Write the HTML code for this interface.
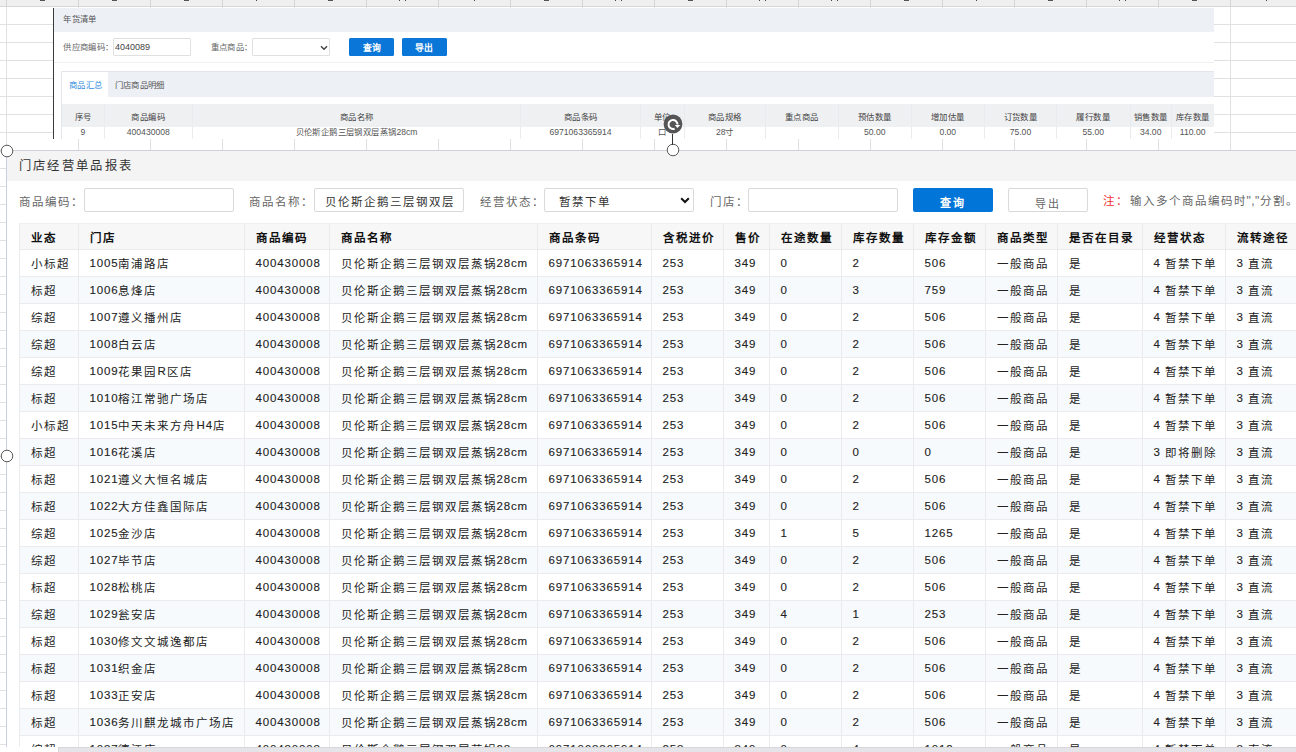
<!DOCTYPE html>
<html lang="zh-CN"><head><meta charset="utf-8"><title>sheet</title>
<style>
html,body{margin:0;padding:0;width:1296px;height:752px;overflow:hidden;background:#fff;position:relative}
body{font-family:"Liberation Sans",sans-serif}
.t{position:absolute;white-space:nowrap}
</style></head><body>
<div style="position:absolute;left:0px;top:0px;width:1296px;height:6px;background:#efefef"></div>
<div style="position:absolute;left:0px;top:6px;width:1296px;height:1px;background:#d6d6d6"></div>
<div style="position:absolute;left:6px;top:0px;width:1px;height:6px;background:#d6d6d6"></div>
<div style="position:absolute;left:6px;top:7px;width:1px;height:745px;background:#e1e1e1"></div>
<div style="position:absolute;left:40px;top:0px;width:5px;height:1px;background:#555"></div>
<div style="position:absolute;left:78px;top:0px;width:1px;height:6px;background:#d6d6d6"></div>
<div style="position:absolute;left:78px;top:7px;width:1px;height:745px;background:#e1e1e1"></div>
<div style="position:absolute;left:112px;top:0px;width:5px;height:1px;background:#555"></div>
<div style="position:absolute;left:150px;top:0px;width:1px;height:6px;background:#d6d6d6"></div>
<div style="position:absolute;left:150px;top:7px;width:1px;height:745px;background:#e1e1e1"></div>
<div style="position:absolute;left:184px;top:0px;width:5px;height:1px;background:#555"></div>
<div style="position:absolute;left:222px;top:0px;width:1px;height:6px;background:#d6d6d6"></div>
<div style="position:absolute;left:222px;top:7px;width:1px;height:745px;background:#e1e1e1"></div>
<div style="position:absolute;left:256px;top:0px;width:1px;height:1px;background:#444"></div>
<div style="position:absolute;left:294px;top:0px;width:1px;height:6px;background:#d6d6d6"></div>
<div style="position:absolute;left:294px;top:7px;width:1px;height:745px;background:#e1e1e1"></div>
<div style="position:absolute;left:328px;top:0px;width:5px;height:1px;background:#555"></div>
<div style="position:absolute;left:366px;top:0px;width:1px;height:6px;background:#d6d6d6"></div>
<div style="position:absolute;left:366px;top:7px;width:1px;height:745px;background:#e1e1e1"></div>
<div style="position:absolute;left:399px;top:0px;width:1px;height:1px;background:#444"></div>
<div style="position:absolute;left:405px;top:0px;width:1px;height:1px;background:#444"></div>
<div style="position:absolute;left:438px;top:0px;width:1px;height:6px;background:#d6d6d6"></div>
<div style="position:absolute;left:438px;top:7px;width:1px;height:745px;background:#e1e1e1"></div>
<div style="position:absolute;left:474px;top:0px;width:1px;height:1px;background:#444"></div>
<div style="position:absolute;left:510px;top:0px;width:1px;height:6px;background:#d6d6d6"></div>
<div style="position:absolute;left:510px;top:7px;width:1px;height:745px;background:#e1e1e1"></div>
<div style="position:absolute;left:544px;top:0px;width:5px;height:1px;background:#555"></div>
<div style="position:absolute;left:582px;top:0px;width:1px;height:6px;background:#d6d6d6"></div>
<div style="position:absolute;left:582px;top:7px;width:1px;height:745px;background:#e1e1e1"></div>
<div style="position:absolute;left:615px;top:0px;width:1px;height:1px;background:#444"></div>
<div style="position:absolute;left:621px;top:0px;width:1px;height:1px;background:#444"></div>
<div style="position:absolute;left:654px;top:0px;width:1px;height:6px;background:#d6d6d6"></div>
<div style="position:absolute;left:654px;top:7px;width:1px;height:745px;background:#e1e1e1"></div>
<div style="position:absolute;left:688px;top:0px;width:5px;height:1px;background:#555"></div>
<div style="position:absolute;left:726px;top:0px;width:1px;height:6px;background:#d6d6d6"></div>
<div style="position:absolute;left:726px;top:7px;width:1px;height:745px;background:#e1e1e1"></div>
<div style="position:absolute;left:759px;top:0px;width:1px;height:1px;background:#444"></div>
<div style="position:absolute;left:765px;top:0px;width:1px;height:1px;background:#444"></div>
<div style="position:absolute;left:798px;top:0px;width:1px;height:6px;background:#d6d6d6"></div>
<div style="position:absolute;left:798px;top:7px;width:1px;height:745px;background:#e1e1e1"></div>
<div style="position:absolute;left:831px;top:0px;width:1px;height:1px;background:#444"></div>
<div style="position:absolute;left:837px;top:0px;width:1px;height:1px;background:#444"></div>
<div style="position:absolute;left:870px;top:0px;width:1px;height:6px;background:#d6d6d6"></div>
<div style="position:absolute;left:870px;top:7px;width:1px;height:745px;background:#e1e1e1"></div>
<div style="position:absolute;left:904px;top:0px;width:5px;height:1px;background:#555"></div>
<div style="position:absolute;left:942px;top:0px;width:1px;height:6px;background:#d6d6d6"></div>
<div style="position:absolute;left:942px;top:7px;width:1px;height:745px;background:#e1e1e1"></div>
<div style="position:absolute;left:976px;top:0px;width:1px;height:1px;background:#444"></div>
<div style="position:absolute;left:1014px;top:0px;width:1px;height:6px;background:#d6d6d6"></div>
<div style="position:absolute;left:1014px;top:7px;width:1px;height:745px;background:#e1e1e1"></div>
<div style="position:absolute;left:1048px;top:0px;width:5px;height:1px;background:#555"></div>
<div style="position:absolute;left:1086px;top:0px;width:1px;height:6px;background:#d6d6d6"></div>
<div style="position:absolute;left:1086px;top:7px;width:1px;height:745px;background:#e1e1e1"></div>
<div style="position:absolute;left:1119px;top:0px;width:1px;height:1px;background:#444"></div>
<div style="position:absolute;left:1125px;top:0px;width:1px;height:1px;background:#444"></div>
<div style="position:absolute;left:1158px;top:0px;width:1px;height:6px;background:#d6d6d6"></div>
<div style="position:absolute;left:1158px;top:7px;width:1px;height:745px;background:#e1e1e1"></div>
<div style="position:absolute;left:1192px;top:0px;width:5px;height:1px;background:#555"></div>
<div style="position:absolute;left:1230px;top:0px;width:1px;height:6px;background:#d6d6d6"></div>
<div style="position:absolute;left:1230px;top:7px;width:1px;height:745px;background:#e1e1e1"></div>
<div style="position:absolute;left:1266px;top:0px;width:1px;height:1px;background:#444"></div>
<div style="position:absolute;left:1302px;top:0px;width:1px;height:6px;background:#d6d6d6"></div>
<div style="position:absolute;left:1302px;top:7px;width:1px;height:745px;background:#e1e1e1"></div>
<div style="position:absolute;left:1335px;top:0px;width:1px;height:1px;background:#444"></div>
<div style="position:absolute;left:1341px;top:0px;width:1px;height:1px;background:#444"></div>
<div style="position:absolute;left:0px;top:24px;width:1296px;height:1px;background:#e1e1e1"></div>
<div style="position:absolute;left:0px;top:42px;width:1296px;height:1px;background:#e1e1e1"></div>
<div style="position:absolute;left:0px;top:60px;width:1296px;height:1px;background:#e1e1e1"></div>
<div style="position:absolute;left:0px;top:78px;width:1296px;height:1px;background:#e1e1e1"></div>
<div style="position:absolute;left:0px;top:96px;width:1296px;height:1px;background:#e1e1e1"></div>
<div style="position:absolute;left:0px;top:114px;width:1296px;height:1px;background:#e1e1e1"></div>
<div style="position:absolute;left:0px;top:132px;width:1296px;height:1px;background:#e1e1e1"></div>
<div style="position:absolute;left:0px;top:150px;width:1296px;height:1px;background:#e1e1e1"></div>
<div style="position:absolute;left:0px;top:168px;width:1296px;height:1px;background:#e1e1e1"></div>
<div style="position:absolute;left:0px;top:186px;width:1296px;height:1px;background:#e1e1e1"></div>
<div style="position:absolute;left:0px;top:204px;width:1296px;height:1px;background:#e1e1e1"></div>
<div style="position:absolute;left:0px;top:222px;width:1296px;height:1px;background:#e1e1e1"></div>
<div style="position:absolute;left:0px;top:240px;width:1296px;height:1px;background:#e1e1e1"></div>
<div style="position:absolute;left:0px;top:258px;width:1296px;height:1px;background:#e1e1e1"></div>
<div style="position:absolute;left:0px;top:276px;width:1296px;height:1px;background:#e1e1e1"></div>
<div style="position:absolute;left:0px;top:294px;width:1296px;height:1px;background:#e1e1e1"></div>
<div style="position:absolute;left:0px;top:312px;width:1296px;height:1px;background:#e1e1e1"></div>
<div style="position:absolute;left:0px;top:330px;width:1296px;height:1px;background:#e1e1e1"></div>
<div style="position:absolute;left:0px;top:348px;width:1296px;height:1px;background:#e1e1e1"></div>
<div style="position:absolute;left:0px;top:366px;width:1296px;height:1px;background:#e1e1e1"></div>
<div style="position:absolute;left:0px;top:384px;width:1296px;height:1px;background:#e1e1e1"></div>
<div style="position:absolute;left:0px;top:402px;width:1296px;height:1px;background:#e1e1e1"></div>
<div style="position:absolute;left:0px;top:420px;width:1296px;height:1px;background:#e1e1e1"></div>
<div style="position:absolute;left:0px;top:438px;width:1296px;height:1px;background:#e1e1e1"></div>
<div style="position:absolute;left:0px;top:456px;width:1296px;height:1px;background:#e1e1e1"></div>
<div style="position:absolute;left:0px;top:474px;width:1296px;height:1px;background:#e1e1e1"></div>
<div style="position:absolute;left:0px;top:492px;width:1296px;height:1px;background:#e1e1e1"></div>
<div style="position:absolute;left:0px;top:510px;width:1296px;height:1px;background:#e1e1e1"></div>
<div style="position:absolute;left:0px;top:528px;width:1296px;height:1px;background:#e1e1e1"></div>
<div style="position:absolute;left:0px;top:546px;width:1296px;height:1px;background:#e1e1e1"></div>
<div style="position:absolute;left:0px;top:564px;width:1296px;height:1px;background:#e1e1e1"></div>
<div style="position:absolute;left:0px;top:582px;width:1296px;height:1px;background:#e1e1e1"></div>
<div style="position:absolute;left:0px;top:600px;width:1296px;height:1px;background:#e1e1e1"></div>
<div style="position:absolute;left:0px;top:618px;width:1296px;height:1px;background:#e1e1e1"></div>
<div style="position:absolute;left:0px;top:636px;width:1296px;height:1px;background:#e1e1e1"></div>
<div style="position:absolute;left:0px;top:654px;width:1296px;height:1px;background:#e1e1e1"></div>
<div style="position:absolute;left:0px;top:672px;width:1296px;height:1px;background:#e1e1e1"></div>
<div style="position:absolute;left:0px;top:690px;width:1296px;height:1px;background:#e1e1e1"></div>
<div style="position:absolute;left:0px;top:708px;width:1296px;height:1px;background:#e1e1e1"></div>
<div style="position:absolute;left:0px;top:726px;width:1296px;height:1px;background:#e1e1e1"></div>
<div style="position:absolute;left:0px;top:744px;width:1296px;height:1px;background:#e1e1e1"></div>
<div style="position:absolute;left:0px;top:762px;width:1296px;height:1px;background:#e1e1e1"></div>
<div style="position:absolute;left:53px;top:8px;width:1161px;height:131px;background:#fff"></div>
<div style="position:absolute;left:53px;top:8px;width:1px;height:131px;background:#3a3a3a"></div>
<div style="position:absolute;left:54px;top:8px;width:1160px;height:23.5px;background:#edf0f5"></div>
<div class="t" style="left:63.3px;top:12px;line-height:10px;color:#555;"><span style="font-size:8.4px;letter-spacing:0.40px">年货清单</span></div>
<div style="position:absolute;left:54px;top:62px;width:1160px;height:1px;background:#eef0f3"></div>
<div class="t" style="left:63.3px;top:40px;line-height:10px;color:#666;"><span style="font-size:8.4px;letter-spacing:0.40px">供应商编码：</span></div>
<div style="position:absolute;left:113px;top:38px;width:78px;height:18px;border:1px solid #e0e0e0;box-sizing:border-box;border-radius:1px"></div>
<div class="t" style="left:115px;top:40px;line-height:10px;color:#444;"><span style="font-size:9px;letter-spacing:0px;vertical-align:0px;">4040089</span></div>
<div class="t" style="left:210.5px;top:40px;line-height:10px;color:#666;"><span style="font-size:8.4px;letter-spacing:0.40px">重点商品：</span></div>
<div style="position:absolute;left:252px;top:38px;width:78px;height:18px;border:1px solid #e0e0e0;box-sizing:border-box;border-radius:1px"></div>
<svg style="position:absolute;left:320px;top:44.5px" width="8" height="6" viewBox="0 0 8 6"><path d="M1 1.2 L4 4.3 L7 1.2" fill="none" stroke="#444" stroke-width="1.4"/></svg>
<div style="position:absolute;left:349px;top:38px;width:45px;height:18px;background:#0a76d8;border-radius:1.5px"></div>
<div class="t" style="left:271.5px;top:40.5px;width:200px;text-align:center;line-height:10px;color:#fff;font-weight:bold"><span style="font-size:8.8px;letter-spacing:0.00px">查询</span></div>
<div style="position:absolute;left:401.5px;top:38px;width:45px;height:18px;background:#0a76d8;border-radius:1.5px"></div>
<div class="t" style="left:324.0px;top:40.5px;width:200px;text-align:center;line-height:10px;color:#fff;font-weight:bold"><span style="font-size:8.8px;letter-spacing:0.00px">导出</span></div>
<div style="position:absolute;left:61.6px;top:71.4px;width:1152.4px;height:26px;background:#edf0f5"></div>
<div style="position:absolute;left:61.6px;top:71.4px;width:46.6px;height:26px;background:#fff"></div>
<div style="position:absolute;left:61px;top:71px;width:1px;height:68px;background:#e3e6ea"></div>
<div style="position:absolute;left:61px;top:71px;width:1153px;height:1px;background:#e3e6ea"></div>
<div class="t" style="left:69px;top:77.5px;line-height:10px;color:#2f8ce0;"><span style="font-size:8.4px;letter-spacing:0.40px">商品汇总</span></div>
<div class="t" style="left:114.5px;top:77.5px;line-height:10px;color:#555;"><span style="font-size:8.4px;letter-spacing:0.40px">门店商品明细</span></div>
<div style="position:absolute;left:62px;top:103.7px;width:1152px;height:23.5px;background:#eff0f2"></div>
<div style="position:absolute;left:104px;top:103.7px;width:1px;height:35px;background:#e9ebee"></div>
<div style="position:absolute;left:192px;top:103.7px;width:1px;height:35px;background:#e9ebee"></div>
<div style="position:absolute;left:520px;top:103.7px;width:1px;height:35px;background:#e9ebee"></div>
<div style="position:absolute;left:640px;top:103.7px;width:1px;height:35px;background:#e9ebee"></div>
<div style="position:absolute;left:684px;top:103.7px;width:1px;height:35px;background:#e9ebee"></div>
<div style="position:absolute;left:765px;top:103.7px;width:1px;height:35px;background:#e9ebee"></div>
<div style="position:absolute;left:838px;top:103.7px;width:1px;height:35px;background:#e9ebee"></div>
<div style="position:absolute;left:911px;top:103.7px;width:1px;height:35px;background:#e9ebee"></div>
<div style="position:absolute;left:984px;top:103.7px;width:1px;height:35px;background:#e9ebee"></div>
<div style="position:absolute;left:1056px;top:103.7px;width:1px;height:35px;background:#e9ebee"></div>
<div style="position:absolute;left:1130px;top:103.7px;width:1px;height:35px;background:#e9ebee"></div>
<div style="position:absolute;left:1171px;top:103.7px;width:1px;height:35px;background:#e9ebee"></div>
<div class="t" style="left:-17.099999999999994px;top:109.5px;width:200px;text-align:center;line-height:10px;color:#444;"><span style="font-size:8.4px;letter-spacing:0.40px">序号</span></div>
<div class="t" style="left:-17.099999999999994px;top:124.7px;width:200px;text-align:center;line-height:10px;color:#555;"><span style="font-size:8.6px;letter-spacing:0px;vertical-align:0px;">9</span></div>
<div class="t" style="left:48.30000000000001px;top:109.5px;width:200px;text-align:center;line-height:10px;color:#444;"><span style="font-size:8.4px;letter-spacing:0.40px">商品编码</span></div>
<div class="t" style="left:48.30000000000001px;top:124.7px;width:200px;text-align:center;line-height:10px;color:#555;"><span style="font-size:8.6px;letter-spacing:0px;vertical-align:0px;">400430008</span></div>
<div class="t" style="left:256.55px;top:109.5px;width:200px;text-align:center;line-height:10px;color:#444;"><span style="font-size:8.4px;letter-spacing:0.40px">商品名称</span></div>
<div class="t" style="left:256.55px;top:124.7px;width:200px;text-align:center;line-height:10px;color:#555;"><span style="font-size:8.4px;letter-spacing:0.40px">贝伦斯企鹅三层钢双层蒸锅</span><span style="font-size:8.6px;letter-spacing:0px;vertical-align:0px;">28cm</span></div>
<div class="t" style="left:480.54999999999995px;top:109.5px;width:200px;text-align:center;line-height:10px;color:#444;"><span style="font-size:8.4px;letter-spacing:0.40px">商品条码</span></div>
<div class="t" style="left:480.54999999999995px;top:124.7px;width:200px;text-align:center;line-height:10px;color:#555;"><span style="font-size:8.6px;letter-spacing:0px;vertical-align:0px;">6971063365914</span></div>
<div class="t" style="left:562.4px;top:109.5px;width:200px;text-align:center;line-height:10px;color:#444;"><span style="font-size:8.4px;letter-spacing:0.40px">单位</span></div>
<div class="t" style="left:562.4px;top:124.7px;width:200px;text-align:center;line-height:10px;color:#555;"><span style="font-size:8.4px;letter-spacing:0.40px">口</span></div>
<div class="t" style="left:624.9px;top:109.5px;width:200px;text-align:center;line-height:10px;color:#444;"><span style="font-size:8.4px;letter-spacing:0.40px">商品规格</span></div>
<div class="t" style="left:624.9px;top:124.7px;width:200px;text-align:center;line-height:10px;color:#555;"><span style="font-size:8.6px;letter-spacing:0px;vertical-align:0px;">28</span><span style="font-size:8.4px;letter-spacing:0.40px">寸</span></div>
<div class="t" style="left:701.8499999999999px;top:109.5px;width:200px;text-align:center;line-height:10px;color:#444;"><span style="font-size:8.4px;letter-spacing:0.40px">重点商品</span></div>
<div class="t" style="left:701.8499999999999px;top:124.7px;width:200px;text-align:center;line-height:10px;color:#555;"></div>
<div class="t" style="left:774.8px;top:109.5px;width:200px;text-align:center;line-height:10px;color:#444;"><span style="font-size:8.4px;letter-spacing:0.40px">预估数量</span></div>
<div class="t" style="left:774.8px;top:124.7px;width:200px;text-align:center;line-height:10px;color:#555;"><span style="font-size:8.6px;letter-spacing:0px;vertical-align:0px;">50.00</span></div>
<div class="t" style="left:847.8px;top:109.5px;width:200px;text-align:center;line-height:10px;color:#444;"><span style="font-size:8.4px;letter-spacing:0.40px">增加估量</span></div>
<div class="t" style="left:847.8px;top:124.7px;width:200px;text-align:center;line-height:10px;color:#555;"><span style="font-size:8.6px;letter-spacing:0px;vertical-align:0px;">0.00</span></div>
<div class="t" style="left:920.4499999999999px;top:109.5px;width:200px;text-align:center;line-height:10px;color:#444;"><span style="font-size:8.4px;letter-spacing:0.40px">订货数量</span></div>
<div class="t" style="left:920.4499999999999px;top:124.7px;width:200px;text-align:center;line-height:10px;color:#555;"><span style="font-size:8.6px;letter-spacing:0px;vertical-align:0px;">75.00</span></div>
<div class="t" style="left:993.3px;top:109.5px;width:200px;text-align:center;line-height:10px;color:#444;"><span style="font-size:8.4px;letter-spacing:0.40px">履行数量</span></div>
<div class="t" style="left:993.3px;top:124.7px;width:200px;text-align:center;line-height:10px;color:#555;"><span style="font-size:8.6px;letter-spacing:0px;vertical-align:0px;">55.00</span></div>
<div class="t" style="left:1050.7px;top:109.5px;width:200px;text-align:center;line-height:10px;color:#444;"><span style="font-size:8.4px;letter-spacing:0.40px">销售数量</span></div>
<div class="t" style="left:1050.7px;top:124.7px;width:200px;text-align:center;line-height:10px;color:#555;"><span style="font-size:8.6px;letter-spacing:0px;vertical-align:0px;">34.00</span></div>
<div class="t" style="left:1092.7px;top:109.5px;width:200px;text-align:center;line-height:10px;color:#444;"><span style="font-size:8.4px;letter-spacing:0.40px">库存数量</span></div>
<div class="t" style="left:1092.7px;top:124.7px;width:200px;text-align:center;line-height:10px;color:#555;"><span style="font-size:8.6px;letter-spacing:0px;vertical-align:0px;">110.00</span></div>
<div style="position:absolute;left:6px;top:150px;width:1290px;height:596.5px;background:#fff"></div>
<div style="position:absolute;left:6px;top:150px;width:1290px;height:1px;background:#cfd2d9"></div>
<div style="position:absolute;left:6px;top:150px;width:1px;height:596.5px;background:#c9cee0"></div>
<div style="position:absolute;left:7px;top:151px;width:1289px;height:30px;background:#f4f4f4"></div>
<div class="t" style="left:18.7px;top:158px;line-height:14px;color:#333;"><span style="font-size:12.3px;letter-spacing:2.35px">门店经营单品报表</span></div>
<div class="t" style="left:18.7px;top:194px;line-height:14px;color:#666;"><span style="font-size:11.5px;letter-spacing:2.00px">商品编码：</span></div>
<div style="position:absolute;left:84px;top:188.4px;width:150px;height:23.400000000000006px;border:1px solid #d9d9d9;box-sizing:border-box;border-radius:2px;background:#fff"></div>
<div class="t" style="left:249px;top:194px;line-height:14px;color:#666;"><span style="font-size:11.5px;letter-spacing:2.00px">商品名称：</span></div>
<div style="position:absolute;left:314px;top:188.4px;width:150px;height:23.400000000000006px;border:1px solid #d9d9d9;box-sizing:border-box;border-radius:2px;background:#fff"></div>
<div class="t" style="left:325px;top:194px;line-height:14px;color:#333;"><span style="font-size:11.5px;letter-spacing:2.00px">贝伦斯企鹅三层钢双层</span></div>
<div class="t" style="left:479.5px;top:194px;line-height:14px;color:#666;"><span style="font-size:11.5px;letter-spacing:2.00px">经营状态：</span></div>
<div style="position:absolute;left:544px;top:188.4px;width:150px;height:23.400000000000006px;border:1px solid #d9d9d9;box-sizing:border-box;border-radius:2px;background:#fff"></div>
<div class="t" style="left:559px;top:194px;line-height:14px;color:#333;"><span style="font-size:11.5px;letter-spacing:2.00px">暂禁下单</span></div>
<svg style="position:absolute;left:680px;top:197px" width="10" height="7" viewBox="0 0 10 7"><path d="M1.2 1.3 L5 5 L8.8 1.3" fill="none" stroke="#111" stroke-width="2"/></svg>
<div class="t" style="left:709.5px;top:194px;line-height:14px;color:#666;"><span style="font-size:11.5px;letter-spacing:2.00px">门店：</span></div>
<div style="position:absolute;left:748px;top:188.4px;width:150px;height:23.400000000000006px;border:1px solid #d9d9d9;box-sizing:border-box;border-radius:2px;background:#fff"></div>
<div style="position:absolute;left:913px;top:188px;width:80px;height:24px;background:#0275d8;border-radius:2px"></div>
<div class="t" style="left:853.0px;top:195px;width:200px;text-align:center;line-height:14px;color:#fff;font-weight:bold"><span style="font-size:11px;letter-spacing:2.50px">查询</span></div>
<div style="position:absolute;left:1008px;top:188.4px;width:80px;height:23.400000000000006px;border:1px solid #d9d9d9;box-sizing:border-box;border-radius:2px;background:#fff"></div>
<div class="t" style="left:948.0px;top:195.5px;width:200px;text-align:center;line-height:14px;color:#666;"><span style="font-size:11px;letter-spacing:2.50px">导出</span></div>
<div class="t" style="left:1103px;top:193px;line-height:14px;color:#f23030;"><span style="font-size:11.5px;letter-spacing:2.00px">注：</span></div>
<div class="t" style="left:1129.5px;top:193px;line-height:14px;color:#666;"><span style="font-size:11.5px;letter-spacing:2.00px">输入多个商品编码时</span><span style="font-size:12px;letter-spacing:0.45px;vertical-align:0px;">","</span><span style="font-size:11.5px;letter-spacing:2.00px">分割。</span></div>
<div style="position:absolute;left:19px;top:223px;width:1277px;height:26.4px;background:#f7f7f7"></div>
<div style="position:absolute;left:19px;top:276.4px;width:1277px;height:27px;background:#f7fafd"></div>
<div style="position:absolute;left:19px;top:330.4px;width:1277px;height:27px;background:#f7fafd"></div>
<div style="position:absolute;left:19px;top:384.4px;width:1277px;height:27px;background:#f7fafd"></div>
<div style="position:absolute;left:19px;top:438.4px;width:1277px;height:27px;background:#f7fafd"></div>
<div style="position:absolute;left:19px;top:492.4px;width:1277px;height:27px;background:#f7fafd"></div>
<div style="position:absolute;left:19px;top:546.4px;width:1277px;height:27px;background:#f7fafd"></div>
<div style="position:absolute;left:19px;top:600.4px;width:1277px;height:27px;background:#f7fafd"></div>
<div style="position:absolute;left:19px;top:654.4px;width:1277px;height:27px;background:#f7fafd"></div>
<div style="position:absolute;left:19px;top:708.4px;width:1277px;height:27px;background:#f7fafd"></div>
<div style="position:absolute;left:19px;top:223px;width:1277px;height:1px;background:#f0f0f0"></div>
<div style="position:absolute;left:19px;top:249.4px;width:1277px;height:1px;background:#ebebee"></div>
<div style="position:absolute;left:19px;top:276.4px;width:1277px;height:1px;background:#ebebee"></div>
<div style="position:absolute;left:19px;top:303.4px;width:1277px;height:1px;background:#ebebee"></div>
<div style="position:absolute;left:19px;top:330.4px;width:1277px;height:1px;background:#ebebee"></div>
<div style="position:absolute;left:19px;top:357.4px;width:1277px;height:1px;background:#ebebee"></div>
<div style="position:absolute;left:19px;top:384.4px;width:1277px;height:1px;background:#ebebee"></div>
<div style="position:absolute;left:19px;top:411.4px;width:1277px;height:1px;background:#ebebee"></div>
<div style="position:absolute;left:19px;top:438.4px;width:1277px;height:1px;background:#ebebee"></div>
<div style="position:absolute;left:19px;top:465.4px;width:1277px;height:1px;background:#ebebee"></div>
<div style="position:absolute;left:19px;top:492.4px;width:1277px;height:1px;background:#ebebee"></div>
<div style="position:absolute;left:19px;top:519.4px;width:1277px;height:1px;background:#ebebee"></div>
<div style="position:absolute;left:19px;top:546.4px;width:1277px;height:1px;background:#ebebee"></div>
<div style="position:absolute;left:19px;top:573.4px;width:1277px;height:1px;background:#ebebee"></div>
<div style="position:absolute;left:19px;top:600.4px;width:1277px;height:1px;background:#ebebee"></div>
<div style="position:absolute;left:19px;top:627.4px;width:1277px;height:1px;background:#ebebee"></div>
<div style="position:absolute;left:19px;top:654.4px;width:1277px;height:1px;background:#ebebee"></div>
<div style="position:absolute;left:19px;top:681.4px;width:1277px;height:1px;background:#ebebee"></div>
<div style="position:absolute;left:19px;top:708.4px;width:1277px;height:1px;background:#ebebee"></div>
<div style="position:absolute;left:19px;top:735.4px;width:1277px;height:1px;background:#ebebee"></div>
<div style="position:absolute;left:19px;top:223px;width:1px;height:523.5px;background:#ebebee"></div>
<div style="position:absolute;left:78px;top:223px;width:1px;height:523.5px;background:#ebebee"></div>
<div style="position:absolute;left:244px;top:223px;width:1px;height:523.5px;background:#ebebee"></div>
<div style="position:absolute;left:329px;top:223px;width:1px;height:523.5px;background:#ebebee"></div>
<div style="position:absolute;left:537px;top:223px;width:1px;height:523.5px;background:#ebebee"></div>
<div style="position:absolute;left:651px;top:223px;width:1px;height:523.5px;background:#ebebee"></div>
<div style="position:absolute;left:723px;top:223px;width:1px;height:523.5px;background:#ebebee"></div>
<div style="position:absolute;left:769px;top:223px;width:1px;height:523.5px;background:#ebebee"></div>
<div style="position:absolute;left:841px;top:223px;width:1px;height:523.5px;background:#ebebee"></div>
<div style="position:absolute;left:913px;top:223px;width:1px;height:523.5px;background:#ebebee"></div>
<div style="position:absolute;left:985px;top:223px;width:1px;height:523.5px;background:#ebebee"></div>
<div style="position:absolute;left:1057px;top:223px;width:1px;height:523.5px;background:#ebebee"></div>
<div style="position:absolute;left:1142px;top:223px;width:1px;height:523.5px;background:#ebebee"></div>
<div style="position:absolute;left:1225px;top:223px;width:1px;height:523.5px;background:#ebebee"></div>
<div class="t" style="left:30.5px;top:230px;line-height:14px;color:#111;font-weight:bold"><span style="font-size:11.5px;letter-spacing:2.00px">业态</span></div>
<div class="t" style="left:89.5px;top:230px;line-height:14px;color:#111;font-weight:bold"><span style="font-size:11.5px;letter-spacing:2.00px">门店</span></div>
<div class="t" style="left:255.5px;top:230px;line-height:14px;color:#111;font-weight:bold"><span style="font-size:11.5px;letter-spacing:2.00px">商品编码</span></div>
<div class="t" style="left:340.5px;top:230px;line-height:14px;color:#111;font-weight:bold"><span style="font-size:11.5px;letter-spacing:2.00px">商品名称</span></div>
<div class="t" style="left:548.5px;top:230px;line-height:14px;color:#111;font-weight:bold"><span style="font-size:11.5px;letter-spacing:2.00px">商品条码</span></div>
<div class="t" style="left:662.5px;top:230px;line-height:14px;color:#111;font-weight:bold"><span style="font-size:11.5px;letter-spacing:2.00px">含税进价</span></div>
<div class="t" style="left:734.5px;top:230px;line-height:14px;color:#111;font-weight:bold"><span style="font-size:11.5px;letter-spacing:2.00px">售价</span></div>
<div class="t" style="left:780.5px;top:230px;line-height:14px;color:#111;font-weight:bold"><span style="font-size:11.5px;letter-spacing:2.00px">在途数量</span></div>
<div class="t" style="left:852.5px;top:230px;line-height:14px;color:#111;font-weight:bold"><span style="font-size:11.5px;letter-spacing:2.00px">库存数量</span></div>
<div class="t" style="left:924.5px;top:230px;line-height:14px;color:#111;font-weight:bold"><span style="font-size:11.5px;letter-spacing:2.00px">库存金额</span></div>
<div class="t" style="left:996.5px;top:230px;line-height:14px;color:#111;font-weight:bold"><span style="font-size:11.5px;letter-spacing:2.00px">商品类型</span></div>
<div class="t" style="left:1068.5px;top:230px;line-height:14px;color:#111;font-weight:bold"><span style="font-size:11.5px;letter-spacing:2.00px">是否在目录</span></div>
<div class="t" style="left:1153.5px;top:230px;line-height:14px;color:#111;font-weight:bold"><span style="font-size:11.5px;letter-spacing:2.00px">经营状态</span></div>
<div class="t" style="left:1236.5px;top:230px;line-height:14px;color:#111;font-weight:bold"><span style="font-size:11.5px;letter-spacing:2.00px">流转途径</span></div>
<div class="t" style="left:30.5px;top:256.4px;line-height:14px;color:#222;"><span style="font-size:11.5px;letter-spacing:2.00px">小标超</span></div>
<div class="t" style="left:89.5px;top:256.4px;line-height:14px;color:#222;"><span style="font-size:11.5px;letter-spacing:0.85px;vertical-align:1px;-webkit-text-stroke:0.12px #222">1005</span><span style="font-size:11.5px;letter-spacing:2.00px">南浦路店</span></div>
<div class="t" style="left:255.5px;top:256.4px;line-height:14px;color:#222;"><span style="font-size:11.5px;letter-spacing:0.85px;vertical-align:1px;-webkit-text-stroke:0.12px #222">400430008</span></div>
<div class="t" style="left:340.5px;top:256.4px;line-height:14px;color:#222;"><span style="font-size:11.5px;letter-spacing:2.00px">贝伦斯企鹅三层钢双层蒸锅</span><span style="font-size:11.5px;letter-spacing:0.85px;vertical-align:1px;-webkit-text-stroke:0.12px #222">28cm</span></div>
<div class="t" style="left:548.5px;top:256.4px;line-height:14px;color:#222;"><span style="font-size:11.5px;letter-spacing:0.85px;vertical-align:1px;-webkit-text-stroke:0.12px #222">6971063365914</span></div>
<div class="t" style="left:662.5px;top:256.4px;line-height:14px;color:#222;"><span style="font-size:11.5px;letter-spacing:0.85px;vertical-align:1px;-webkit-text-stroke:0.12px #222">253</span></div>
<div class="t" style="left:734.5px;top:256.4px;line-height:14px;color:#222;"><span style="font-size:11.5px;letter-spacing:0.85px;vertical-align:1px;-webkit-text-stroke:0.12px #222">349</span></div>
<div class="t" style="left:780.5px;top:256.4px;line-height:14px;color:#222;"><span style="font-size:11.5px;letter-spacing:0.85px;vertical-align:1px;-webkit-text-stroke:0.12px #222">0</span></div>
<div class="t" style="left:852.5px;top:256.4px;line-height:14px;color:#222;"><span style="font-size:11.5px;letter-spacing:0.85px;vertical-align:1px;-webkit-text-stroke:0.12px #222">2</span></div>
<div class="t" style="left:924.5px;top:256.4px;line-height:14px;color:#222;"><span style="font-size:11.5px;letter-spacing:0.85px;vertical-align:1px;-webkit-text-stroke:0.12px #222">506</span></div>
<div class="t" style="left:996.5px;top:256.4px;line-height:14px;color:#222;"><span style="font-size:11.5px;letter-spacing:2.00px">一般商品</span></div>
<div class="t" style="left:1068.5px;top:256.4px;line-height:14px;color:#222;"><span style="font-size:11.5px;letter-spacing:2.00px">是</span></div>
<div class="t" style="left:1153.5px;top:256.4px;line-height:14px;color:#222;"><span style="font-size:11.5px;letter-spacing:0.85px;vertical-align:1px;-webkit-text-stroke:0.12px #222">4 </span><span style="font-size:11.5px;letter-spacing:2.00px">暂禁下单</span></div>
<div class="t" style="left:1236.5px;top:256.4px;line-height:14px;color:#222;"><span style="font-size:11.5px;letter-spacing:0.85px;vertical-align:1px;-webkit-text-stroke:0.12px #222">3 </span><span style="font-size:11.5px;letter-spacing:2.00px">直流</span></div>
<div class="t" style="left:30.5px;top:283.4px;line-height:14px;color:#222;"><span style="font-size:11.5px;letter-spacing:2.00px">标超</span></div>
<div class="t" style="left:89.5px;top:283.4px;line-height:14px;color:#222;"><span style="font-size:11.5px;letter-spacing:0.85px;vertical-align:1px;-webkit-text-stroke:0.12px #222">1006</span><span style="font-size:11.5px;letter-spacing:2.00px">息烽店</span></div>
<div class="t" style="left:255.5px;top:283.4px;line-height:14px;color:#222;"><span style="font-size:11.5px;letter-spacing:0.85px;vertical-align:1px;-webkit-text-stroke:0.12px #222">400430008</span></div>
<div class="t" style="left:340.5px;top:283.4px;line-height:14px;color:#222;"><span style="font-size:11.5px;letter-spacing:2.00px">贝伦斯企鹅三层钢双层蒸锅</span><span style="font-size:11.5px;letter-spacing:0.85px;vertical-align:1px;-webkit-text-stroke:0.12px #222">28cm</span></div>
<div class="t" style="left:548.5px;top:283.4px;line-height:14px;color:#222;"><span style="font-size:11.5px;letter-spacing:0.85px;vertical-align:1px;-webkit-text-stroke:0.12px #222">6971063365914</span></div>
<div class="t" style="left:662.5px;top:283.4px;line-height:14px;color:#222;"><span style="font-size:11.5px;letter-spacing:0.85px;vertical-align:1px;-webkit-text-stroke:0.12px #222">253</span></div>
<div class="t" style="left:734.5px;top:283.4px;line-height:14px;color:#222;"><span style="font-size:11.5px;letter-spacing:0.85px;vertical-align:1px;-webkit-text-stroke:0.12px #222">349</span></div>
<div class="t" style="left:780.5px;top:283.4px;line-height:14px;color:#222;"><span style="font-size:11.5px;letter-spacing:0.85px;vertical-align:1px;-webkit-text-stroke:0.12px #222">0</span></div>
<div class="t" style="left:852.5px;top:283.4px;line-height:14px;color:#222;"><span style="font-size:11.5px;letter-spacing:0.85px;vertical-align:1px;-webkit-text-stroke:0.12px #222">3</span></div>
<div class="t" style="left:924.5px;top:283.4px;line-height:14px;color:#222;"><span style="font-size:11.5px;letter-spacing:0.85px;vertical-align:1px;-webkit-text-stroke:0.12px #222">759</span></div>
<div class="t" style="left:996.5px;top:283.4px;line-height:14px;color:#222;"><span style="font-size:11.5px;letter-spacing:2.00px">一般商品</span></div>
<div class="t" style="left:1068.5px;top:283.4px;line-height:14px;color:#222;"><span style="font-size:11.5px;letter-spacing:2.00px">是</span></div>
<div class="t" style="left:1153.5px;top:283.4px;line-height:14px;color:#222;"><span style="font-size:11.5px;letter-spacing:0.85px;vertical-align:1px;-webkit-text-stroke:0.12px #222">4 </span><span style="font-size:11.5px;letter-spacing:2.00px">暂禁下单</span></div>
<div class="t" style="left:1236.5px;top:283.4px;line-height:14px;color:#222;"><span style="font-size:11.5px;letter-spacing:0.85px;vertical-align:1px;-webkit-text-stroke:0.12px #222">3 </span><span style="font-size:11.5px;letter-spacing:2.00px">直流</span></div>
<div class="t" style="left:30.5px;top:310.4px;line-height:14px;color:#222;"><span style="font-size:11.5px;letter-spacing:2.00px">综超</span></div>
<div class="t" style="left:89.5px;top:310.4px;line-height:14px;color:#222;"><span style="font-size:11.5px;letter-spacing:0.85px;vertical-align:1px;-webkit-text-stroke:0.12px #222">1007</span><span style="font-size:11.5px;letter-spacing:2.00px">遵义播州店</span></div>
<div class="t" style="left:255.5px;top:310.4px;line-height:14px;color:#222;"><span style="font-size:11.5px;letter-spacing:0.85px;vertical-align:1px;-webkit-text-stroke:0.12px #222">400430008</span></div>
<div class="t" style="left:340.5px;top:310.4px;line-height:14px;color:#222;"><span style="font-size:11.5px;letter-spacing:2.00px">贝伦斯企鹅三层钢双层蒸锅</span><span style="font-size:11.5px;letter-spacing:0.85px;vertical-align:1px;-webkit-text-stroke:0.12px #222">28cm</span></div>
<div class="t" style="left:548.5px;top:310.4px;line-height:14px;color:#222;"><span style="font-size:11.5px;letter-spacing:0.85px;vertical-align:1px;-webkit-text-stroke:0.12px #222">6971063365914</span></div>
<div class="t" style="left:662.5px;top:310.4px;line-height:14px;color:#222;"><span style="font-size:11.5px;letter-spacing:0.85px;vertical-align:1px;-webkit-text-stroke:0.12px #222">253</span></div>
<div class="t" style="left:734.5px;top:310.4px;line-height:14px;color:#222;"><span style="font-size:11.5px;letter-spacing:0.85px;vertical-align:1px;-webkit-text-stroke:0.12px #222">349</span></div>
<div class="t" style="left:780.5px;top:310.4px;line-height:14px;color:#222;"><span style="font-size:11.5px;letter-spacing:0.85px;vertical-align:1px;-webkit-text-stroke:0.12px #222">0</span></div>
<div class="t" style="left:852.5px;top:310.4px;line-height:14px;color:#222;"><span style="font-size:11.5px;letter-spacing:0.85px;vertical-align:1px;-webkit-text-stroke:0.12px #222">2</span></div>
<div class="t" style="left:924.5px;top:310.4px;line-height:14px;color:#222;"><span style="font-size:11.5px;letter-spacing:0.85px;vertical-align:1px;-webkit-text-stroke:0.12px #222">506</span></div>
<div class="t" style="left:996.5px;top:310.4px;line-height:14px;color:#222;"><span style="font-size:11.5px;letter-spacing:2.00px">一般商品</span></div>
<div class="t" style="left:1068.5px;top:310.4px;line-height:14px;color:#222;"><span style="font-size:11.5px;letter-spacing:2.00px">是</span></div>
<div class="t" style="left:1153.5px;top:310.4px;line-height:14px;color:#222;"><span style="font-size:11.5px;letter-spacing:0.85px;vertical-align:1px;-webkit-text-stroke:0.12px #222">4 </span><span style="font-size:11.5px;letter-spacing:2.00px">暂禁下单</span></div>
<div class="t" style="left:1236.5px;top:310.4px;line-height:14px;color:#222;"><span style="font-size:11.5px;letter-spacing:0.85px;vertical-align:1px;-webkit-text-stroke:0.12px #222">3 </span><span style="font-size:11.5px;letter-spacing:2.00px">直流</span></div>
<div class="t" style="left:30.5px;top:337.4px;line-height:14px;color:#222;"><span style="font-size:11.5px;letter-spacing:2.00px">综超</span></div>
<div class="t" style="left:89.5px;top:337.4px;line-height:14px;color:#222;"><span style="font-size:11.5px;letter-spacing:0.85px;vertical-align:1px;-webkit-text-stroke:0.12px #222">1008</span><span style="font-size:11.5px;letter-spacing:2.00px">白云店</span></div>
<div class="t" style="left:255.5px;top:337.4px;line-height:14px;color:#222;"><span style="font-size:11.5px;letter-spacing:0.85px;vertical-align:1px;-webkit-text-stroke:0.12px #222">400430008</span></div>
<div class="t" style="left:340.5px;top:337.4px;line-height:14px;color:#222;"><span style="font-size:11.5px;letter-spacing:2.00px">贝伦斯企鹅三层钢双层蒸锅</span><span style="font-size:11.5px;letter-spacing:0.85px;vertical-align:1px;-webkit-text-stroke:0.12px #222">28cm</span></div>
<div class="t" style="left:548.5px;top:337.4px;line-height:14px;color:#222;"><span style="font-size:11.5px;letter-spacing:0.85px;vertical-align:1px;-webkit-text-stroke:0.12px #222">6971063365914</span></div>
<div class="t" style="left:662.5px;top:337.4px;line-height:14px;color:#222;"><span style="font-size:11.5px;letter-spacing:0.85px;vertical-align:1px;-webkit-text-stroke:0.12px #222">253</span></div>
<div class="t" style="left:734.5px;top:337.4px;line-height:14px;color:#222;"><span style="font-size:11.5px;letter-spacing:0.85px;vertical-align:1px;-webkit-text-stroke:0.12px #222">349</span></div>
<div class="t" style="left:780.5px;top:337.4px;line-height:14px;color:#222;"><span style="font-size:11.5px;letter-spacing:0.85px;vertical-align:1px;-webkit-text-stroke:0.12px #222">0</span></div>
<div class="t" style="left:852.5px;top:337.4px;line-height:14px;color:#222;"><span style="font-size:11.5px;letter-spacing:0.85px;vertical-align:1px;-webkit-text-stroke:0.12px #222">2</span></div>
<div class="t" style="left:924.5px;top:337.4px;line-height:14px;color:#222;"><span style="font-size:11.5px;letter-spacing:0.85px;vertical-align:1px;-webkit-text-stroke:0.12px #222">506</span></div>
<div class="t" style="left:996.5px;top:337.4px;line-height:14px;color:#222;"><span style="font-size:11.5px;letter-spacing:2.00px">一般商品</span></div>
<div class="t" style="left:1068.5px;top:337.4px;line-height:14px;color:#222;"><span style="font-size:11.5px;letter-spacing:2.00px">是</span></div>
<div class="t" style="left:1153.5px;top:337.4px;line-height:14px;color:#222;"><span style="font-size:11.5px;letter-spacing:0.85px;vertical-align:1px;-webkit-text-stroke:0.12px #222">4 </span><span style="font-size:11.5px;letter-spacing:2.00px">暂禁下单</span></div>
<div class="t" style="left:1236.5px;top:337.4px;line-height:14px;color:#222;"><span style="font-size:11.5px;letter-spacing:0.85px;vertical-align:1px;-webkit-text-stroke:0.12px #222">3 </span><span style="font-size:11.5px;letter-spacing:2.00px">直流</span></div>
<div class="t" style="left:30.5px;top:364.4px;line-height:14px;color:#222;"><span style="font-size:11.5px;letter-spacing:2.00px">综超</span></div>
<div class="t" style="left:89.5px;top:364.4px;line-height:14px;color:#222;"><span style="font-size:11.5px;letter-spacing:0.85px;vertical-align:1px;-webkit-text-stroke:0.12px #222">1009</span><span style="font-size:11.5px;letter-spacing:2.00px">花果园</span><span style="font-size:11.5px;letter-spacing:0.85px;vertical-align:1px;-webkit-text-stroke:0.12px #222">R</span><span style="font-size:11.5px;letter-spacing:2.00px">区店</span></div>
<div class="t" style="left:255.5px;top:364.4px;line-height:14px;color:#222;"><span style="font-size:11.5px;letter-spacing:0.85px;vertical-align:1px;-webkit-text-stroke:0.12px #222">400430008</span></div>
<div class="t" style="left:340.5px;top:364.4px;line-height:14px;color:#222;"><span style="font-size:11.5px;letter-spacing:2.00px">贝伦斯企鹅三层钢双层蒸锅</span><span style="font-size:11.5px;letter-spacing:0.85px;vertical-align:1px;-webkit-text-stroke:0.12px #222">28cm</span></div>
<div class="t" style="left:548.5px;top:364.4px;line-height:14px;color:#222;"><span style="font-size:11.5px;letter-spacing:0.85px;vertical-align:1px;-webkit-text-stroke:0.12px #222">6971063365914</span></div>
<div class="t" style="left:662.5px;top:364.4px;line-height:14px;color:#222;"><span style="font-size:11.5px;letter-spacing:0.85px;vertical-align:1px;-webkit-text-stroke:0.12px #222">253</span></div>
<div class="t" style="left:734.5px;top:364.4px;line-height:14px;color:#222;"><span style="font-size:11.5px;letter-spacing:0.85px;vertical-align:1px;-webkit-text-stroke:0.12px #222">349</span></div>
<div class="t" style="left:780.5px;top:364.4px;line-height:14px;color:#222;"><span style="font-size:11.5px;letter-spacing:0.85px;vertical-align:1px;-webkit-text-stroke:0.12px #222">0</span></div>
<div class="t" style="left:852.5px;top:364.4px;line-height:14px;color:#222;"><span style="font-size:11.5px;letter-spacing:0.85px;vertical-align:1px;-webkit-text-stroke:0.12px #222">2</span></div>
<div class="t" style="left:924.5px;top:364.4px;line-height:14px;color:#222;"><span style="font-size:11.5px;letter-spacing:0.85px;vertical-align:1px;-webkit-text-stroke:0.12px #222">506</span></div>
<div class="t" style="left:996.5px;top:364.4px;line-height:14px;color:#222;"><span style="font-size:11.5px;letter-spacing:2.00px">一般商品</span></div>
<div class="t" style="left:1068.5px;top:364.4px;line-height:14px;color:#222;"><span style="font-size:11.5px;letter-spacing:2.00px">是</span></div>
<div class="t" style="left:1153.5px;top:364.4px;line-height:14px;color:#222;"><span style="font-size:11.5px;letter-spacing:0.85px;vertical-align:1px;-webkit-text-stroke:0.12px #222">4 </span><span style="font-size:11.5px;letter-spacing:2.00px">暂禁下单</span></div>
<div class="t" style="left:1236.5px;top:364.4px;line-height:14px;color:#222;"><span style="font-size:11.5px;letter-spacing:0.85px;vertical-align:1px;-webkit-text-stroke:0.12px #222">3 </span><span style="font-size:11.5px;letter-spacing:2.00px">直流</span></div>
<div class="t" style="left:30.5px;top:391.4px;line-height:14px;color:#222;"><span style="font-size:11.5px;letter-spacing:2.00px">标超</span></div>
<div class="t" style="left:89.5px;top:391.4px;line-height:14px;color:#222;"><span style="font-size:11.5px;letter-spacing:0.85px;vertical-align:1px;-webkit-text-stroke:0.12px #222">1010</span><span style="font-size:11.5px;letter-spacing:2.00px">榕江常驰广场店</span></div>
<div class="t" style="left:255.5px;top:391.4px;line-height:14px;color:#222;"><span style="font-size:11.5px;letter-spacing:0.85px;vertical-align:1px;-webkit-text-stroke:0.12px #222">400430008</span></div>
<div class="t" style="left:340.5px;top:391.4px;line-height:14px;color:#222;"><span style="font-size:11.5px;letter-spacing:2.00px">贝伦斯企鹅三层钢双层蒸锅</span><span style="font-size:11.5px;letter-spacing:0.85px;vertical-align:1px;-webkit-text-stroke:0.12px #222">28cm</span></div>
<div class="t" style="left:548.5px;top:391.4px;line-height:14px;color:#222;"><span style="font-size:11.5px;letter-spacing:0.85px;vertical-align:1px;-webkit-text-stroke:0.12px #222">6971063365914</span></div>
<div class="t" style="left:662.5px;top:391.4px;line-height:14px;color:#222;"><span style="font-size:11.5px;letter-spacing:0.85px;vertical-align:1px;-webkit-text-stroke:0.12px #222">253</span></div>
<div class="t" style="left:734.5px;top:391.4px;line-height:14px;color:#222;"><span style="font-size:11.5px;letter-spacing:0.85px;vertical-align:1px;-webkit-text-stroke:0.12px #222">349</span></div>
<div class="t" style="left:780.5px;top:391.4px;line-height:14px;color:#222;"><span style="font-size:11.5px;letter-spacing:0.85px;vertical-align:1px;-webkit-text-stroke:0.12px #222">0</span></div>
<div class="t" style="left:852.5px;top:391.4px;line-height:14px;color:#222;"><span style="font-size:11.5px;letter-spacing:0.85px;vertical-align:1px;-webkit-text-stroke:0.12px #222">2</span></div>
<div class="t" style="left:924.5px;top:391.4px;line-height:14px;color:#222;"><span style="font-size:11.5px;letter-spacing:0.85px;vertical-align:1px;-webkit-text-stroke:0.12px #222">506</span></div>
<div class="t" style="left:996.5px;top:391.4px;line-height:14px;color:#222;"><span style="font-size:11.5px;letter-spacing:2.00px">一般商品</span></div>
<div class="t" style="left:1068.5px;top:391.4px;line-height:14px;color:#222;"><span style="font-size:11.5px;letter-spacing:2.00px">是</span></div>
<div class="t" style="left:1153.5px;top:391.4px;line-height:14px;color:#222;"><span style="font-size:11.5px;letter-spacing:0.85px;vertical-align:1px;-webkit-text-stroke:0.12px #222">4 </span><span style="font-size:11.5px;letter-spacing:2.00px">暂禁下单</span></div>
<div class="t" style="left:1236.5px;top:391.4px;line-height:14px;color:#222;"><span style="font-size:11.5px;letter-spacing:0.85px;vertical-align:1px;-webkit-text-stroke:0.12px #222">3 </span><span style="font-size:11.5px;letter-spacing:2.00px">直流</span></div>
<div class="t" style="left:30.5px;top:418.4px;line-height:14px;color:#222;"><span style="font-size:11.5px;letter-spacing:2.00px">小标超</span></div>
<div class="t" style="left:89.5px;top:418.4px;line-height:14px;color:#222;"><span style="font-size:11.5px;letter-spacing:0.85px;vertical-align:1px;-webkit-text-stroke:0.12px #222">1015</span><span style="font-size:11.5px;letter-spacing:2.00px">中天未来方舟</span><span style="font-size:11.5px;letter-spacing:0.85px;vertical-align:1px;-webkit-text-stroke:0.12px #222">H4</span><span style="font-size:11.5px;letter-spacing:2.00px">店</span></div>
<div class="t" style="left:255.5px;top:418.4px;line-height:14px;color:#222;"><span style="font-size:11.5px;letter-spacing:0.85px;vertical-align:1px;-webkit-text-stroke:0.12px #222">400430008</span></div>
<div class="t" style="left:340.5px;top:418.4px;line-height:14px;color:#222;"><span style="font-size:11.5px;letter-spacing:2.00px">贝伦斯企鹅三层钢双层蒸锅</span><span style="font-size:11.5px;letter-spacing:0.85px;vertical-align:1px;-webkit-text-stroke:0.12px #222">28cm</span></div>
<div class="t" style="left:548.5px;top:418.4px;line-height:14px;color:#222;"><span style="font-size:11.5px;letter-spacing:0.85px;vertical-align:1px;-webkit-text-stroke:0.12px #222">6971063365914</span></div>
<div class="t" style="left:662.5px;top:418.4px;line-height:14px;color:#222;"><span style="font-size:11.5px;letter-spacing:0.85px;vertical-align:1px;-webkit-text-stroke:0.12px #222">253</span></div>
<div class="t" style="left:734.5px;top:418.4px;line-height:14px;color:#222;"><span style="font-size:11.5px;letter-spacing:0.85px;vertical-align:1px;-webkit-text-stroke:0.12px #222">349</span></div>
<div class="t" style="left:780.5px;top:418.4px;line-height:14px;color:#222;"><span style="font-size:11.5px;letter-spacing:0.85px;vertical-align:1px;-webkit-text-stroke:0.12px #222">0</span></div>
<div class="t" style="left:852.5px;top:418.4px;line-height:14px;color:#222;"><span style="font-size:11.5px;letter-spacing:0.85px;vertical-align:1px;-webkit-text-stroke:0.12px #222">2</span></div>
<div class="t" style="left:924.5px;top:418.4px;line-height:14px;color:#222;"><span style="font-size:11.5px;letter-spacing:0.85px;vertical-align:1px;-webkit-text-stroke:0.12px #222">506</span></div>
<div class="t" style="left:996.5px;top:418.4px;line-height:14px;color:#222;"><span style="font-size:11.5px;letter-spacing:2.00px">一般商品</span></div>
<div class="t" style="left:1068.5px;top:418.4px;line-height:14px;color:#222;"><span style="font-size:11.5px;letter-spacing:2.00px">是</span></div>
<div class="t" style="left:1153.5px;top:418.4px;line-height:14px;color:#222;"><span style="font-size:11.5px;letter-spacing:0.85px;vertical-align:1px;-webkit-text-stroke:0.12px #222">4 </span><span style="font-size:11.5px;letter-spacing:2.00px">暂禁下单</span></div>
<div class="t" style="left:1236.5px;top:418.4px;line-height:14px;color:#222;"><span style="font-size:11.5px;letter-spacing:0.85px;vertical-align:1px;-webkit-text-stroke:0.12px #222">3 </span><span style="font-size:11.5px;letter-spacing:2.00px">直流</span></div>
<div class="t" style="left:30.5px;top:445.4px;line-height:14px;color:#222;"><span style="font-size:11.5px;letter-spacing:2.00px">标超</span></div>
<div class="t" style="left:89.5px;top:445.4px;line-height:14px;color:#222;"><span style="font-size:11.5px;letter-spacing:0.85px;vertical-align:1px;-webkit-text-stroke:0.12px #222">1016</span><span style="font-size:11.5px;letter-spacing:2.00px">花溪店</span></div>
<div class="t" style="left:255.5px;top:445.4px;line-height:14px;color:#222;"><span style="font-size:11.5px;letter-spacing:0.85px;vertical-align:1px;-webkit-text-stroke:0.12px #222">400430008</span></div>
<div class="t" style="left:340.5px;top:445.4px;line-height:14px;color:#222;"><span style="font-size:11.5px;letter-spacing:2.00px">贝伦斯企鹅三层钢双层蒸锅</span><span style="font-size:11.5px;letter-spacing:0.85px;vertical-align:1px;-webkit-text-stroke:0.12px #222">28cm</span></div>
<div class="t" style="left:548.5px;top:445.4px;line-height:14px;color:#222;"><span style="font-size:11.5px;letter-spacing:0.85px;vertical-align:1px;-webkit-text-stroke:0.12px #222">6971063365914</span></div>
<div class="t" style="left:662.5px;top:445.4px;line-height:14px;color:#222;"><span style="font-size:11.5px;letter-spacing:0.85px;vertical-align:1px;-webkit-text-stroke:0.12px #222">253</span></div>
<div class="t" style="left:734.5px;top:445.4px;line-height:14px;color:#222;"><span style="font-size:11.5px;letter-spacing:0.85px;vertical-align:1px;-webkit-text-stroke:0.12px #222">349</span></div>
<div class="t" style="left:780.5px;top:445.4px;line-height:14px;color:#222;"><span style="font-size:11.5px;letter-spacing:0.85px;vertical-align:1px;-webkit-text-stroke:0.12px #222">0</span></div>
<div class="t" style="left:852.5px;top:445.4px;line-height:14px;color:#222;"><span style="font-size:11.5px;letter-spacing:0.85px;vertical-align:1px;-webkit-text-stroke:0.12px #222">0</span></div>
<div class="t" style="left:924.5px;top:445.4px;line-height:14px;color:#222;"><span style="font-size:11.5px;letter-spacing:0.85px;vertical-align:1px;-webkit-text-stroke:0.12px #222">0</span></div>
<div class="t" style="left:996.5px;top:445.4px;line-height:14px;color:#222;"><span style="font-size:11.5px;letter-spacing:2.00px">一般商品</span></div>
<div class="t" style="left:1068.5px;top:445.4px;line-height:14px;color:#222;"><span style="font-size:11.5px;letter-spacing:2.00px">是</span></div>
<div class="t" style="left:1153.5px;top:445.4px;line-height:14px;color:#222;"><span style="font-size:11.5px;letter-spacing:0.85px;vertical-align:1px;-webkit-text-stroke:0.12px #222">3 </span><span style="font-size:11.5px;letter-spacing:2.00px">即将删除</span></div>
<div class="t" style="left:1236.5px;top:445.4px;line-height:14px;color:#222;"><span style="font-size:11.5px;letter-spacing:0.85px;vertical-align:1px;-webkit-text-stroke:0.12px #222">3 </span><span style="font-size:11.5px;letter-spacing:2.00px">直流</span></div>
<div class="t" style="left:30.5px;top:472.4px;line-height:14px;color:#222;"><span style="font-size:11.5px;letter-spacing:2.00px">标超</span></div>
<div class="t" style="left:89.5px;top:472.4px;line-height:14px;color:#222;"><span style="font-size:11.5px;letter-spacing:0.85px;vertical-align:1px;-webkit-text-stroke:0.12px #222">1021</span><span style="font-size:11.5px;letter-spacing:2.00px">遵义大恒名城店</span></div>
<div class="t" style="left:255.5px;top:472.4px;line-height:14px;color:#222;"><span style="font-size:11.5px;letter-spacing:0.85px;vertical-align:1px;-webkit-text-stroke:0.12px #222">400430008</span></div>
<div class="t" style="left:340.5px;top:472.4px;line-height:14px;color:#222;"><span style="font-size:11.5px;letter-spacing:2.00px">贝伦斯企鹅三层钢双层蒸锅</span><span style="font-size:11.5px;letter-spacing:0.85px;vertical-align:1px;-webkit-text-stroke:0.12px #222">28cm</span></div>
<div class="t" style="left:548.5px;top:472.4px;line-height:14px;color:#222;"><span style="font-size:11.5px;letter-spacing:0.85px;vertical-align:1px;-webkit-text-stroke:0.12px #222">6971063365914</span></div>
<div class="t" style="left:662.5px;top:472.4px;line-height:14px;color:#222;"><span style="font-size:11.5px;letter-spacing:0.85px;vertical-align:1px;-webkit-text-stroke:0.12px #222">253</span></div>
<div class="t" style="left:734.5px;top:472.4px;line-height:14px;color:#222;"><span style="font-size:11.5px;letter-spacing:0.85px;vertical-align:1px;-webkit-text-stroke:0.12px #222">349</span></div>
<div class="t" style="left:780.5px;top:472.4px;line-height:14px;color:#222;"><span style="font-size:11.5px;letter-spacing:0.85px;vertical-align:1px;-webkit-text-stroke:0.12px #222">0</span></div>
<div class="t" style="left:852.5px;top:472.4px;line-height:14px;color:#222;"><span style="font-size:11.5px;letter-spacing:0.85px;vertical-align:1px;-webkit-text-stroke:0.12px #222">2</span></div>
<div class="t" style="left:924.5px;top:472.4px;line-height:14px;color:#222;"><span style="font-size:11.5px;letter-spacing:0.85px;vertical-align:1px;-webkit-text-stroke:0.12px #222">506</span></div>
<div class="t" style="left:996.5px;top:472.4px;line-height:14px;color:#222;"><span style="font-size:11.5px;letter-spacing:2.00px">一般商品</span></div>
<div class="t" style="left:1068.5px;top:472.4px;line-height:14px;color:#222;"><span style="font-size:11.5px;letter-spacing:2.00px">是</span></div>
<div class="t" style="left:1153.5px;top:472.4px;line-height:14px;color:#222;"><span style="font-size:11.5px;letter-spacing:0.85px;vertical-align:1px;-webkit-text-stroke:0.12px #222">4 </span><span style="font-size:11.5px;letter-spacing:2.00px">暂禁下单</span></div>
<div class="t" style="left:1236.5px;top:472.4px;line-height:14px;color:#222;"><span style="font-size:11.5px;letter-spacing:0.85px;vertical-align:1px;-webkit-text-stroke:0.12px #222">3 </span><span style="font-size:11.5px;letter-spacing:2.00px">直流</span></div>
<div class="t" style="left:30.5px;top:499.4px;line-height:14px;color:#222;"><span style="font-size:11.5px;letter-spacing:2.00px">标超</span></div>
<div class="t" style="left:89.5px;top:499.4px;line-height:14px;color:#222;"><span style="font-size:11.5px;letter-spacing:0.85px;vertical-align:1px;-webkit-text-stroke:0.12px #222">1022</span><span style="font-size:11.5px;letter-spacing:2.00px">大方佳鑫国际店</span></div>
<div class="t" style="left:255.5px;top:499.4px;line-height:14px;color:#222;"><span style="font-size:11.5px;letter-spacing:0.85px;vertical-align:1px;-webkit-text-stroke:0.12px #222">400430008</span></div>
<div class="t" style="left:340.5px;top:499.4px;line-height:14px;color:#222;"><span style="font-size:11.5px;letter-spacing:2.00px">贝伦斯企鹅三层钢双层蒸锅</span><span style="font-size:11.5px;letter-spacing:0.85px;vertical-align:1px;-webkit-text-stroke:0.12px #222">28cm</span></div>
<div class="t" style="left:548.5px;top:499.4px;line-height:14px;color:#222;"><span style="font-size:11.5px;letter-spacing:0.85px;vertical-align:1px;-webkit-text-stroke:0.12px #222">6971063365914</span></div>
<div class="t" style="left:662.5px;top:499.4px;line-height:14px;color:#222;"><span style="font-size:11.5px;letter-spacing:0.85px;vertical-align:1px;-webkit-text-stroke:0.12px #222">253</span></div>
<div class="t" style="left:734.5px;top:499.4px;line-height:14px;color:#222;"><span style="font-size:11.5px;letter-spacing:0.85px;vertical-align:1px;-webkit-text-stroke:0.12px #222">349</span></div>
<div class="t" style="left:780.5px;top:499.4px;line-height:14px;color:#222;"><span style="font-size:11.5px;letter-spacing:0.85px;vertical-align:1px;-webkit-text-stroke:0.12px #222">0</span></div>
<div class="t" style="left:852.5px;top:499.4px;line-height:14px;color:#222;"><span style="font-size:11.5px;letter-spacing:0.85px;vertical-align:1px;-webkit-text-stroke:0.12px #222">2</span></div>
<div class="t" style="left:924.5px;top:499.4px;line-height:14px;color:#222;"><span style="font-size:11.5px;letter-spacing:0.85px;vertical-align:1px;-webkit-text-stroke:0.12px #222">506</span></div>
<div class="t" style="left:996.5px;top:499.4px;line-height:14px;color:#222;"><span style="font-size:11.5px;letter-spacing:2.00px">一般商品</span></div>
<div class="t" style="left:1068.5px;top:499.4px;line-height:14px;color:#222;"><span style="font-size:11.5px;letter-spacing:2.00px">是</span></div>
<div class="t" style="left:1153.5px;top:499.4px;line-height:14px;color:#222;"><span style="font-size:11.5px;letter-spacing:0.85px;vertical-align:1px;-webkit-text-stroke:0.12px #222">4 </span><span style="font-size:11.5px;letter-spacing:2.00px">暂禁下单</span></div>
<div class="t" style="left:1236.5px;top:499.4px;line-height:14px;color:#222;"><span style="font-size:11.5px;letter-spacing:0.85px;vertical-align:1px;-webkit-text-stroke:0.12px #222">3 </span><span style="font-size:11.5px;letter-spacing:2.00px">直流</span></div>
<div class="t" style="left:30.5px;top:526.4px;line-height:14px;color:#222;"><span style="font-size:11.5px;letter-spacing:2.00px">综超</span></div>
<div class="t" style="left:89.5px;top:526.4px;line-height:14px;color:#222;"><span style="font-size:11.5px;letter-spacing:0.85px;vertical-align:1px;-webkit-text-stroke:0.12px #222">1025</span><span style="font-size:11.5px;letter-spacing:2.00px">金沙店</span></div>
<div class="t" style="left:255.5px;top:526.4px;line-height:14px;color:#222;"><span style="font-size:11.5px;letter-spacing:0.85px;vertical-align:1px;-webkit-text-stroke:0.12px #222">400430008</span></div>
<div class="t" style="left:340.5px;top:526.4px;line-height:14px;color:#222;"><span style="font-size:11.5px;letter-spacing:2.00px">贝伦斯企鹅三层钢双层蒸锅</span><span style="font-size:11.5px;letter-spacing:0.85px;vertical-align:1px;-webkit-text-stroke:0.12px #222">28cm</span></div>
<div class="t" style="left:548.5px;top:526.4px;line-height:14px;color:#222;"><span style="font-size:11.5px;letter-spacing:0.85px;vertical-align:1px;-webkit-text-stroke:0.12px #222">6971063365914</span></div>
<div class="t" style="left:662.5px;top:526.4px;line-height:14px;color:#222;"><span style="font-size:11.5px;letter-spacing:0.85px;vertical-align:1px;-webkit-text-stroke:0.12px #222">253</span></div>
<div class="t" style="left:734.5px;top:526.4px;line-height:14px;color:#222;"><span style="font-size:11.5px;letter-spacing:0.85px;vertical-align:1px;-webkit-text-stroke:0.12px #222">349</span></div>
<div class="t" style="left:780.5px;top:526.4px;line-height:14px;color:#222;"><span style="font-size:11.5px;letter-spacing:0.85px;vertical-align:1px;-webkit-text-stroke:0.12px #222">1</span></div>
<div class="t" style="left:852.5px;top:526.4px;line-height:14px;color:#222;"><span style="font-size:11.5px;letter-spacing:0.85px;vertical-align:1px;-webkit-text-stroke:0.12px #222">5</span></div>
<div class="t" style="left:924.5px;top:526.4px;line-height:14px;color:#222;"><span style="font-size:11.5px;letter-spacing:0.85px;vertical-align:1px;-webkit-text-stroke:0.12px #222">1265</span></div>
<div class="t" style="left:996.5px;top:526.4px;line-height:14px;color:#222;"><span style="font-size:11.5px;letter-spacing:2.00px">一般商品</span></div>
<div class="t" style="left:1068.5px;top:526.4px;line-height:14px;color:#222;"><span style="font-size:11.5px;letter-spacing:2.00px">是</span></div>
<div class="t" style="left:1153.5px;top:526.4px;line-height:14px;color:#222;"><span style="font-size:11.5px;letter-spacing:0.85px;vertical-align:1px;-webkit-text-stroke:0.12px #222">4 </span><span style="font-size:11.5px;letter-spacing:2.00px">暂禁下单</span></div>
<div class="t" style="left:1236.5px;top:526.4px;line-height:14px;color:#222;"><span style="font-size:11.5px;letter-spacing:0.85px;vertical-align:1px;-webkit-text-stroke:0.12px #222">3 </span><span style="font-size:11.5px;letter-spacing:2.00px">直流</span></div>
<div class="t" style="left:30.5px;top:553.4px;line-height:14px;color:#222;"><span style="font-size:11.5px;letter-spacing:2.00px">综超</span></div>
<div class="t" style="left:89.5px;top:553.4px;line-height:14px;color:#222;"><span style="font-size:11.5px;letter-spacing:0.85px;vertical-align:1px;-webkit-text-stroke:0.12px #222">1027</span><span style="font-size:11.5px;letter-spacing:2.00px">毕节店</span></div>
<div class="t" style="left:255.5px;top:553.4px;line-height:14px;color:#222;"><span style="font-size:11.5px;letter-spacing:0.85px;vertical-align:1px;-webkit-text-stroke:0.12px #222">400430008</span></div>
<div class="t" style="left:340.5px;top:553.4px;line-height:14px;color:#222;"><span style="font-size:11.5px;letter-spacing:2.00px">贝伦斯企鹅三层钢双层蒸锅</span><span style="font-size:11.5px;letter-spacing:0.85px;vertical-align:1px;-webkit-text-stroke:0.12px #222">28cm</span></div>
<div class="t" style="left:548.5px;top:553.4px;line-height:14px;color:#222;"><span style="font-size:11.5px;letter-spacing:0.85px;vertical-align:1px;-webkit-text-stroke:0.12px #222">6971063365914</span></div>
<div class="t" style="left:662.5px;top:553.4px;line-height:14px;color:#222;"><span style="font-size:11.5px;letter-spacing:0.85px;vertical-align:1px;-webkit-text-stroke:0.12px #222">253</span></div>
<div class="t" style="left:734.5px;top:553.4px;line-height:14px;color:#222;"><span style="font-size:11.5px;letter-spacing:0.85px;vertical-align:1px;-webkit-text-stroke:0.12px #222">349</span></div>
<div class="t" style="left:780.5px;top:553.4px;line-height:14px;color:#222;"><span style="font-size:11.5px;letter-spacing:0.85px;vertical-align:1px;-webkit-text-stroke:0.12px #222">0</span></div>
<div class="t" style="left:852.5px;top:553.4px;line-height:14px;color:#222;"><span style="font-size:11.5px;letter-spacing:0.85px;vertical-align:1px;-webkit-text-stroke:0.12px #222">2</span></div>
<div class="t" style="left:924.5px;top:553.4px;line-height:14px;color:#222;"><span style="font-size:11.5px;letter-spacing:0.85px;vertical-align:1px;-webkit-text-stroke:0.12px #222">506</span></div>
<div class="t" style="left:996.5px;top:553.4px;line-height:14px;color:#222;"><span style="font-size:11.5px;letter-spacing:2.00px">一般商品</span></div>
<div class="t" style="left:1068.5px;top:553.4px;line-height:14px;color:#222;"><span style="font-size:11.5px;letter-spacing:2.00px">是</span></div>
<div class="t" style="left:1153.5px;top:553.4px;line-height:14px;color:#222;"><span style="font-size:11.5px;letter-spacing:0.85px;vertical-align:1px;-webkit-text-stroke:0.12px #222">4 </span><span style="font-size:11.5px;letter-spacing:2.00px">暂禁下单</span></div>
<div class="t" style="left:1236.5px;top:553.4px;line-height:14px;color:#222;"><span style="font-size:11.5px;letter-spacing:0.85px;vertical-align:1px;-webkit-text-stroke:0.12px #222">3 </span><span style="font-size:11.5px;letter-spacing:2.00px">直流</span></div>
<div class="t" style="left:30.5px;top:580.4px;line-height:14px;color:#222;"><span style="font-size:11.5px;letter-spacing:2.00px">标超</span></div>
<div class="t" style="left:89.5px;top:580.4px;line-height:14px;color:#222;"><span style="font-size:11.5px;letter-spacing:0.85px;vertical-align:1px;-webkit-text-stroke:0.12px #222">1028</span><span style="font-size:11.5px;letter-spacing:2.00px">松桃店</span></div>
<div class="t" style="left:255.5px;top:580.4px;line-height:14px;color:#222;"><span style="font-size:11.5px;letter-spacing:0.85px;vertical-align:1px;-webkit-text-stroke:0.12px #222">400430008</span></div>
<div class="t" style="left:340.5px;top:580.4px;line-height:14px;color:#222;"><span style="font-size:11.5px;letter-spacing:2.00px">贝伦斯企鹅三层钢双层蒸锅</span><span style="font-size:11.5px;letter-spacing:0.85px;vertical-align:1px;-webkit-text-stroke:0.12px #222">28cm</span></div>
<div class="t" style="left:548.5px;top:580.4px;line-height:14px;color:#222;"><span style="font-size:11.5px;letter-spacing:0.85px;vertical-align:1px;-webkit-text-stroke:0.12px #222">6971063365914</span></div>
<div class="t" style="left:662.5px;top:580.4px;line-height:14px;color:#222;"><span style="font-size:11.5px;letter-spacing:0.85px;vertical-align:1px;-webkit-text-stroke:0.12px #222">253</span></div>
<div class="t" style="left:734.5px;top:580.4px;line-height:14px;color:#222;"><span style="font-size:11.5px;letter-spacing:0.85px;vertical-align:1px;-webkit-text-stroke:0.12px #222">349</span></div>
<div class="t" style="left:780.5px;top:580.4px;line-height:14px;color:#222;"><span style="font-size:11.5px;letter-spacing:0.85px;vertical-align:1px;-webkit-text-stroke:0.12px #222">0</span></div>
<div class="t" style="left:852.5px;top:580.4px;line-height:14px;color:#222;"><span style="font-size:11.5px;letter-spacing:0.85px;vertical-align:1px;-webkit-text-stroke:0.12px #222">2</span></div>
<div class="t" style="left:924.5px;top:580.4px;line-height:14px;color:#222;"><span style="font-size:11.5px;letter-spacing:0.85px;vertical-align:1px;-webkit-text-stroke:0.12px #222">506</span></div>
<div class="t" style="left:996.5px;top:580.4px;line-height:14px;color:#222;"><span style="font-size:11.5px;letter-spacing:2.00px">一般商品</span></div>
<div class="t" style="left:1068.5px;top:580.4px;line-height:14px;color:#222;"><span style="font-size:11.5px;letter-spacing:2.00px">是</span></div>
<div class="t" style="left:1153.5px;top:580.4px;line-height:14px;color:#222;"><span style="font-size:11.5px;letter-spacing:0.85px;vertical-align:1px;-webkit-text-stroke:0.12px #222">4 </span><span style="font-size:11.5px;letter-spacing:2.00px">暂禁下单</span></div>
<div class="t" style="left:1236.5px;top:580.4px;line-height:14px;color:#222;"><span style="font-size:11.5px;letter-spacing:0.85px;vertical-align:1px;-webkit-text-stroke:0.12px #222">3 </span><span style="font-size:11.5px;letter-spacing:2.00px">直流</span></div>
<div class="t" style="left:30.5px;top:607.4px;line-height:14px;color:#222;"><span style="font-size:11.5px;letter-spacing:2.00px">综超</span></div>
<div class="t" style="left:89.5px;top:607.4px;line-height:14px;color:#222;"><span style="font-size:11.5px;letter-spacing:0.85px;vertical-align:1px;-webkit-text-stroke:0.12px #222">1029</span><span style="font-size:11.5px;letter-spacing:2.00px">瓮安店</span></div>
<div class="t" style="left:255.5px;top:607.4px;line-height:14px;color:#222;"><span style="font-size:11.5px;letter-spacing:0.85px;vertical-align:1px;-webkit-text-stroke:0.12px #222">400430008</span></div>
<div class="t" style="left:340.5px;top:607.4px;line-height:14px;color:#222;"><span style="font-size:11.5px;letter-spacing:2.00px">贝伦斯企鹅三层钢双层蒸锅</span><span style="font-size:11.5px;letter-spacing:0.85px;vertical-align:1px;-webkit-text-stroke:0.12px #222">28cm</span></div>
<div class="t" style="left:548.5px;top:607.4px;line-height:14px;color:#222;"><span style="font-size:11.5px;letter-spacing:0.85px;vertical-align:1px;-webkit-text-stroke:0.12px #222">6971063365914</span></div>
<div class="t" style="left:662.5px;top:607.4px;line-height:14px;color:#222;"><span style="font-size:11.5px;letter-spacing:0.85px;vertical-align:1px;-webkit-text-stroke:0.12px #222">253</span></div>
<div class="t" style="left:734.5px;top:607.4px;line-height:14px;color:#222;"><span style="font-size:11.5px;letter-spacing:0.85px;vertical-align:1px;-webkit-text-stroke:0.12px #222">349</span></div>
<div class="t" style="left:780.5px;top:607.4px;line-height:14px;color:#222;"><span style="font-size:11.5px;letter-spacing:0.85px;vertical-align:1px;-webkit-text-stroke:0.12px #222">4</span></div>
<div class="t" style="left:852.5px;top:607.4px;line-height:14px;color:#222;"><span style="font-size:11.5px;letter-spacing:0.85px;vertical-align:1px;-webkit-text-stroke:0.12px #222">1</span></div>
<div class="t" style="left:924.5px;top:607.4px;line-height:14px;color:#222;"><span style="font-size:11.5px;letter-spacing:0.85px;vertical-align:1px;-webkit-text-stroke:0.12px #222">253</span></div>
<div class="t" style="left:996.5px;top:607.4px;line-height:14px;color:#222;"><span style="font-size:11.5px;letter-spacing:2.00px">一般商品</span></div>
<div class="t" style="left:1068.5px;top:607.4px;line-height:14px;color:#222;"><span style="font-size:11.5px;letter-spacing:2.00px">是</span></div>
<div class="t" style="left:1153.5px;top:607.4px;line-height:14px;color:#222;"><span style="font-size:11.5px;letter-spacing:0.85px;vertical-align:1px;-webkit-text-stroke:0.12px #222">4 </span><span style="font-size:11.5px;letter-spacing:2.00px">暂禁下单</span></div>
<div class="t" style="left:1236.5px;top:607.4px;line-height:14px;color:#222;"><span style="font-size:11.5px;letter-spacing:0.85px;vertical-align:1px;-webkit-text-stroke:0.12px #222">3 </span><span style="font-size:11.5px;letter-spacing:2.00px">直流</span></div>
<div class="t" style="left:30.5px;top:634.4px;line-height:14px;color:#222;"><span style="font-size:11.5px;letter-spacing:2.00px">标超</span></div>
<div class="t" style="left:89.5px;top:634.4px;line-height:14px;color:#222;"><span style="font-size:11.5px;letter-spacing:0.85px;vertical-align:1px;-webkit-text-stroke:0.12px #222">1030</span><span style="font-size:11.5px;letter-spacing:2.00px">修文文城逸都店</span></div>
<div class="t" style="left:255.5px;top:634.4px;line-height:14px;color:#222;"><span style="font-size:11.5px;letter-spacing:0.85px;vertical-align:1px;-webkit-text-stroke:0.12px #222">400430008</span></div>
<div class="t" style="left:340.5px;top:634.4px;line-height:14px;color:#222;"><span style="font-size:11.5px;letter-spacing:2.00px">贝伦斯企鹅三层钢双层蒸锅</span><span style="font-size:11.5px;letter-spacing:0.85px;vertical-align:1px;-webkit-text-stroke:0.12px #222">28cm</span></div>
<div class="t" style="left:548.5px;top:634.4px;line-height:14px;color:#222;"><span style="font-size:11.5px;letter-spacing:0.85px;vertical-align:1px;-webkit-text-stroke:0.12px #222">6971063365914</span></div>
<div class="t" style="left:662.5px;top:634.4px;line-height:14px;color:#222;"><span style="font-size:11.5px;letter-spacing:0.85px;vertical-align:1px;-webkit-text-stroke:0.12px #222">253</span></div>
<div class="t" style="left:734.5px;top:634.4px;line-height:14px;color:#222;"><span style="font-size:11.5px;letter-spacing:0.85px;vertical-align:1px;-webkit-text-stroke:0.12px #222">349</span></div>
<div class="t" style="left:780.5px;top:634.4px;line-height:14px;color:#222;"><span style="font-size:11.5px;letter-spacing:0.85px;vertical-align:1px;-webkit-text-stroke:0.12px #222">0</span></div>
<div class="t" style="left:852.5px;top:634.4px;line-height:14px;color:#222;"><span style="font-size:11.5px;letter-spacing:0.85px;vertical-align:1px;-webkit-text-stroke:0.12px #222">2</span></div>
<div class="t" style="left:924.5px;top:634.4px;line-height:14px;color:#222;"><span style="font-size:11.5px;letter-spacing:0.85px;vertical-align:1px;-webkit-text-stroke:0.12px #222">506</span></div>
<div class="t" style="left:996.5px;top:634.4px;line-height:14px;color:#222;"><span style="font-size:11.5px;letter-spacing:2.00px">一般商品</span></div>
<div class="t" style="left:1068.5px;top:634.4px;line-height:14px;color:#222;"><span style="font-size:11.5px;letter-spacing:2.00px">是</span></div>
<div class="t" style="left:1153.5px;top:634.4px;line-height:14px;color:#222;"><span style="font-size:11.5px;letter-spacing:0.85px;vertical-align:1px;-webkit-text-stroke:0.12px #222">4 </span><span style="font-size:11.5px;letter-spacing:2.00px">暂禁下单</span></div>
<div class="t" style="left:1236.5px;top:634.4px;line-height:14px;color:#222;"><span style="font-size:11.5px;letter-spacing:0.85px;vertical-align:1px;-webkit-text-stroke:0.12px #222">3 </span><span style="font-size:11.5px;letter-spacing:2.00px">直流</span></div>
<div class="t" style="left:30.5px;top:661.4px;line-height:14px;color:#222;"><span style="font-size:11.5px;letter-spacing:2.00px">标超</span></div>
<div class="t" style="left:89.5px;top:661.4px;line-height:14px;color:#222;"><span style="font-size:11.5px;letter-spacing:0.85px;vertical-align:1px;-webkit-text-stroke:0.12px #222">1031</span><span style="font-size:11.5px;letter-spacing:2.00px">织金店</span></div>
<div class="t" style="left:255.5px;top:661.4px;line-height:14px;color:#222;"><span style="font-size:11.5px;letter-spacing:0.85px;vertical-align:1px;-webkit-text-stroke:0.12px #222">400430008</span></div>
<div class="t" style="left:340.5px;top:661.4px;line-height:14px;color:#222;"><span style="font-size:11.5px;letter-spacing:2.00px">贝伦斯企鹅三层钢双层蒸锅</span><span style="font-size:11.5px;letter-spacing:0.85px;vertical-align:1px;-webkit-text-stroke:0.12px #222">28cm</span></div>
<div class="t" style="left:548.5px;top:661.4px;line-height:14px;color:#222;"><span style="font-size:11.5px;letter-spacing:0.85px;vertical-align:1px;-webkit-text-stroke:0.12px #222">6971063365914</span></div>
<div class="t" style="left:662.5px;top:661.4px;line-height:14px;color:#222;"><span style="font-size:11.5px;letter-spacing:0.85px;vertical-align:1px;-webkit-text-stroke:0.12px #222">253</span></div>
<div class="t" style="left:734.5px;top:661.4px;line-height:14px;color:#222;"><span style="font-size:11.5px;letter-spacing:0.85px;vertical-align:1px;-webkit-text-stroke:0.12px #222">349</span></div>
<div class="t" style="left:780.5px;top:661.4px;line-height:14px;color:#222;"><span style="font-size:11.5px;letter-spacing:0.85px;vertical-align:1px;-webkit-text-stroke:0.12px #222">0</span></div>
<div class="t" style="left:852.5px;top:661.4px;line-height:14px;color:#222;"><span style="font-size:11.5px;letter-spacing:0.85px;vertical-align:1px;-webkit-text-stroke:0.12px #222">2</span></div>
<div class="t" style="left:924.5px;top:661.4px;line-height:14px;color:#222;"><span style="font-size:11.5px;letter-spacing:0.85px;vertical-align:1px;-webkit-text-stroke:0.12px #222">506</span></div>
<div class="t" style="left:996.5px;top:661.4px;line-height:14px;color:#222;"><span style="font-size:11.5px;letter-spacing:2.00px">一般商品</span></div>
<div class="t" style="left:1068.5px;top:661.4px;line-height:14px;color:#222;"><span style="font-size:11.5px;letter-spacing:2.00px">是</span></div>
<div class="t" style="left:1153.5px;top:661.4px;line-height:14px;color:#222;"><span style="font-size:11.5px;letter-spacing:0.85px;vertical-align:1px;-webkit-text-stroke:0.12px #222">4 </span><span style="font-size:11.5px;letter-spacing:2.00px">暂禁下单</span></div>
<div class="t" style="left:1236.5px;top:661.4px;line-height:14px;color:#222;"><span style="font-size:11.5px;letter-spacing:0.85px;vertical-align:1px;-webkit-text-stroke:0.12px #222">3 </span><span style="font-size:11.5px;letter-spacing:2.00px">直流</span></div>
<div class="t" style="left:30.5px;top:688.4px;line-height:14px;color:#222;"><span style="font-size:11.5px;letter-spacing:2.00px">标超</span></div>
<div class="t" style="left:89.5px;top:688.4px;line-height:14px;color:#222;"><span style="font-size:11.5px;letter-spacing:0.85px;vertical-align:1px;-webkit-text-stroke:0.12px #222">1033</span><span style="font-size:11.5px;letter-spacing:2.00px">正安店</span></div>
<div class="t" style="left:255.5px;top:688.4px;line-height:14px;color:#222;"><span style="font-size:11.5px;letter-spacing:0.85px;vertical-align:1px;-webkit-text-stroke:0.12px #222">400430008</span></div>
<div class="t" style="left:340.5px;top:688.4px;line-height:14px;color:#222;"><span style="font-size:11.5px;letter-spacing:2.00px">贝伦斯企鹅三层钢双层蒸锅</span><span style="font-size:11.5px;letter-spacing:0.85px;vertical-align:1px;-webkit-text-stroke:0.12px #222">28cm</span></div>
<div class="t" style="left:548.5px;top:688.4px;line-height:14px;color:#222;"><span style="font-size:11.5px;letter-spacing:0.85px;vertical-align:1px;-webkit-text-stroke:0.12px #222">6971063365914</span></div>
<div class="t" style="left:662.5px;top:688.4px;line-height:14px;color:#222;"><span style="font-size:11.5px;letter-spacing:0.85px;vertical-align:1px;-webkit-text-stroke:0.12px #222">253</span></div>
<div class="t" style="left:734.5px;top:688.4px;line-height:14px;color:#222;"><span style="font-size:11.5px;letter-spacing:0.85px;vertical-align:1px;-webkit-text-stroke:0.12px #222">349</span></div>
<div class="t" style="left:780.5px;top:688.4px;line-height:14px;color:#222;"><span style="font-size:11.5px;letter-spacing:0.85px;vertical-align:1px;-webkit-text-stroke:0.12px #222">0</span></div>
<div class="t" style="left:852.5px;top:688.4px;line-height:14px;color:#222;"><span style="font-size:11.5px;letter-spacing:0.85px;vertical-align:1px;-webkit-text-stroke:0.12px #222">2</span></div>
<div class="t" style="left:924.5px;top:688.4px;line-height:14px;color:#222;"><span style="font-size:11.5px;letter-spacing:0.85px;vertical-align:1px;-webkit-text-stroke:0.12px #222">506</span></div>
<div class="t" style="left:996.5px;top:688.4px;line-height:14px;color:#222;"><span style="font-size:11.5px;letter-spacing:2.00px">一般商品</span></div>
<div class="t" style="left:1068.5px;top:688.4px;line-height:14px;color:#222;"><span style="font-size:11.5px;letter-spacing:2.00px">是</span></div>
<div class="t" style="left:1153.5px;top:688.4px;line-height:14px;color:#222;"><span style="font-size:11.5px;letter-spacing:0.85px;vertical-align:1px;-webkit-text-stroke:0.12px #222">4 </span><span style="font-size:11.5px;letter-spacing:2.00px">暂禁下单</span></div>
<div class="t" style="left:1236.5px;top:688.4px;line-height:14px;color:#222;"><span style="font-size:11.5px;letter-spacing:0.85px;vertical-align:1px;-webkit-text-stroke:0.12px #222">3 </span><span style="font-size:11.5px;letter-spacing:2.00px">直流</span></div>
<div class="t" style="left:30.5px;top:715.4px;line-height:14px;color:#222;"><span style="font-size:11.5px;letter-spacing:2.00px">标超</span></div>
<div class="t" style="left:89.5px;top:715.4px;line-height:14px;color:#222;"><span style="font-size:11.5px;letter-spacing:0.85px;vertical-align:1px;-webkit-text-stroke:0.12px #222">1036</span><span style="font-size:11.5px;letter-spacing:2.00px">务川麒龙城市广场店</span></div>
<div class="t" style="left:255.5px;top:715.4px;line-height:14px;color:#222;"><span style="font-size:11.5px;letter-spacing:0.85px;vertical-align:1px;-webkit-text-stroke:0.12px #222">400430008</span></div>
<div class="t" style="left:340.5px;top:715.4px;line-height:14px;color:#222;"><span style="font-size:11.5px;letter-spacing:2.00px">贝伦斯企鹅三层钢双层蒸锅</span><span style="font-size:11.5px;letter-spacing:0.85px;vertical-align:1px;-webkit-text-stroke:0.12px #222">28cm</span></div>
<div class="t" style="left:548.5px;top:715.4px;line-height:14px;color:#222;"><span style="font-size:11.5px;letter-spacing:0.85px;vertical-align:1px;-webkit-text-stroke:0.12px #222">6971063365914</span></div>
<div class="t" style="left:662.5px;top:715.4px;line-height:14px;color:#222;"><span style="font-size:11.5px;letter-spacing:0.85px;vertical-align:1px;-webkit-text-stroke:0.12px #222">253</span></div>
<div class="t" style="left:734.5px;top:715.4px;line-height:14px;color:#222;"><span style="font-size:11.5px;letter-spacing:0.85px;vertical-align:1px;-webkit-text-stroke:0.12px #222">349</span></div>
<div class="t" style="left:780.5px;top:715.4px;line-height:14px;color:#222;"><span style="font-size:11.5px;letter-spacing:0.85px;vertical-align:1px;-webkit-text-stroke:0.12px #222">0</span></div>
<div class="t" style="left:852.5px;top:715.4px;line-height:14px;color:#222;"><span style="font-size:11.5px;letter-spacing:0.85px;vertical-align:1px;-webkit-text-stroke:0.12px #222">2</span></div>
<div class="t" style="left:924.5px;top:715.4px;line-height:14px;color:#222;"><span style="font-size:11.5px;letter-spacing:0.85px;vertical-align:1px;-webkit-text-stroke:0.12px #222">506</span></div>
<div class="t" style="left:996.5px;top:715.4px;line-height:14px;color:#222;"><span style="font-size:11.5px;letter-spacing:2.00px">一般商品</span></div>
<div class="t" style="left:1068.5px;top:715.4px;line-height:14px;color:#222;"><span style="font-size:11.5px;letter-spacing:2.00px">是</span></div>
<div class="t" style="left:1153.5px;top:715.4px;line-height:14px;color:#222;"><span style="font-size:11.5px;letter-spacing:0.85px;vertical-align:1px;-webkit-text-stroke:0.12px #222">4 </span><span style="font-size:11.5px;letter-spacing:2.00px">暂禁下单</span></div>
<div class="t" style="left:1236.5px;top:715.4px;line-height:14px;color:#222;"><span style="font-size:11.5px;letter-spacing:0.85px;vertical-align:1px;-webkit-text-stroke:0.12px #222">3 </span><span style="font-size:11.5px;letter-spacing:2.00px">直流</span></div>
<div class="t" style="left:30.5px;top:742.4px;line-height:14px;color:#222;"><span style="font-size:11.5px;letter-spacing:2.00px">综超</span></div>
<div class="t" style="left:89.5px;top:742.4px;line-height:14px;color:#222;"><span style="font-size:11.5px;letter-spacing:0.85px;vertical-align:1px;-webkit-text-stroke:0.12px #222">1037</span><span style="font-size:11.5px;letter-spacing:2.00px">德江店</span></div>
<div class="t" style="left:255.5px;top:742.4px;line-height:14px;color:#222;"><span style="font-size:11.5px;letter-spacing:0.85px;vertical-align:1px;-webkit-text-stroke:0.12px #222">400430008</span></div>
<div class="t" style="left:340.5px;top:742.4px;line-height:14px;color:#222;"><span style="font-size:11.5px;letter-spacing:2.00px">贝伦斯企鹅三层钢双层蒸锅</span><span style="font-size:11.5px;letter-spacing:0.85px;vertical-align:1px;-webkit-text-stroke:0.12px #222">28cm</span></div>
<div class="t" style="left:548.5px;top:742.4px;line-height:14px;color:#222;"><span style="font-size:11.5px;letter-spacing:0.85px;vertical-align:1px;-webkit-text-stroke:0.12px #222">6971063365914</span></div>
<div class="t" style="left:662.5px;top:742.4px;line-height:14px;color:#222;"><span style="font-size:11.5px;letter-spacing:0.85px;vertical-align:1px;-webkit-text-stroke:0.12px #222">253</span></div>
<div class="t" style="left:734.5px;top:742.4px;line-height:14px;color:#222;"><span style="font-size:11.5px;letter-spacing:0.85px;vertical-align:1px;-webkit-text-stroke:0.12px #222">349</span></div>
<div class="t" style="left:780.5px;top:742.4px;line-height:14px;color:#222;"><span style="font-size:11.5px;letter-spacing:0.85px;vertical-align:1px;-webkit-text-stroke:0.12px #222">0</span></div>
<div class="t" style="left:852.5px;top:742.4px;line-height:14px;color:#222;"><span style="font-size:11.5px;letter-spacing:0.85px;vertical-align:1px;-webkit-text-stroke:0.12px #222">4</span></div>
<div class="t" style="left:924.5px;top:742.4px;line-height:14px;color:#222;"><span style="font-size:11.5px;letter-spacing:0.85px;vertical-align:1px;-webkit-text-stroke:0.12px #222">1012</span></div>
<div class="t" style="left:996.5px;top:742.4px;line-height:14px;color:#222;"><span style="font-size:11.5px;letter-spacing:2.00px">一般商品</span></div>
<div class="t" style="left:1068.5px;top:742.4px;line-height:14px;color:#222;"><span style="font-size:11.5px;letter-spacing:2.00px">是</span></div>
<div class="t" style="left:1153.5px;top:742.4px;line-height:14px;color:#222;"><span style="font-size:11.5px;letter-spacing:0.85px;vertical-align:1px;-webkit-text-stroke:0.12px #222">4 </span><span style="font-size:11.5px;letter-spacing:2.00px">暂禁下单</span></div>
<div class="t" style="left:1236.5px;top:742.4px;line-height:14px;color:#222;"><span style="font-size:11.5px;letter-spacing:0.85px;vertical-align:1px;-webkit-text-stroke:0.12px #222">3 </span><span style="font-size:11.5px;letter-spacing:2.00px">直流</span></div>
<div style="position:absolute;left:0px;top:746.5px;width:1296px;height:5.5px;background:#fff"></div>
<div style="position:absolute;left:0px;top:744px;width:6px;height:1px;background:#e1e1e1"></div>
<div style="position:absolute;left:58px;top:747px;width:1238px;height:5px;background:#e4e4e9;border-top:1px solid #d6d6db;border-left:1px solid #d6d6db;box-sizing:border-box"></div>
<svg style="position:absolute;left:-1.5px;top:142.5px" width="16" height="16" viewBox="0 0 16 16"><circle cx="8" cy="8" r="5.8" fill="#fff" stroke="#5a5a5a" stroke-width="1"/></svg>
<svg style="position:absolute;left:-1.5px;top:448.3px" width="16" height="16" viewBox="0 0 16 16"><circle cx="8" cy="8" r="5.8" fill="#fff" stroke="#5a5a5a" stroke-width="1"/></svg>
<svg style="position:absolute;left:664.5px;top:142.4px" width="16" height="16" viewBox="0 0 16 16"><circle cx="8" cy="8" r="5.8" fill="#fff" stroke="#5a5a5a" stroke-width="1"/></svg>
<div style="position:absolute;left:672px;top:133.5px;width:1.3px;height:11.5px;background:#333"></div>
<svg style="position:absolute;left:662.6px;top:114.3px" width="20" height="20" viewBox="0 0 20 20"><circle cx="10" cy="10" r="9.4" fill="#555"/><path d="M11.6 14.7 A4.5 4.5 0 1 1 14.5 10.6" fill="none" stroke="#fff" stroke-width="2"/><path d="M11.8 11.0 L17.4 10.9 L14.4 13.9 Z" fill="#fff"/></svg>
</body></html>
